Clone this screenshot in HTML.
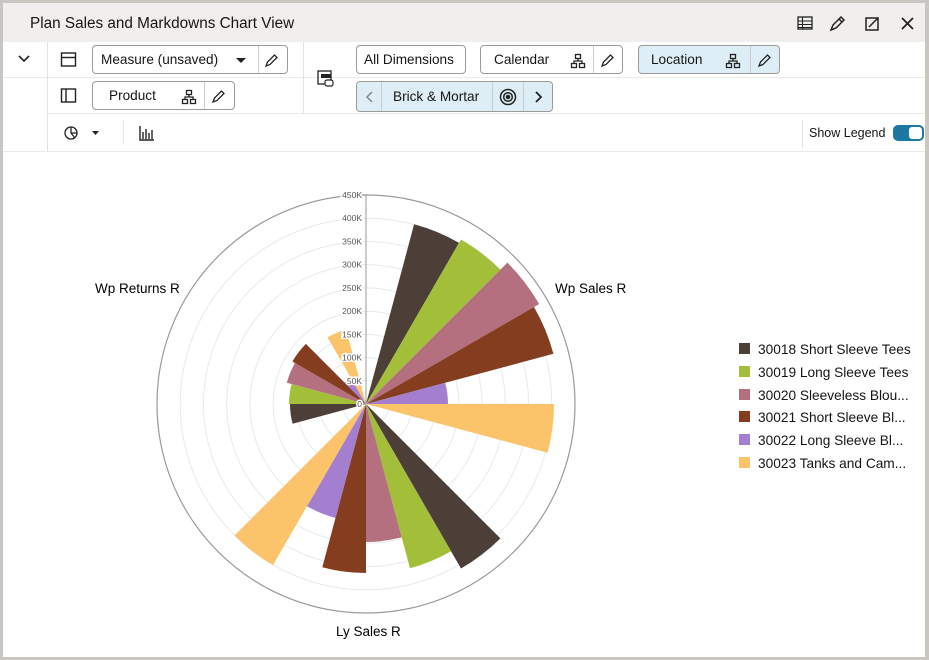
<!DOCTYPE html>
<html><head><meta charset="utf-8"><style>
*{box-sizing:border-box;margin:0;padding:0}
body{width:929px;height:660px;background:#c9c6c2;font-family:"Liberation Sans",sans-serif;color:#161513;overflow:hidden;position:relative}
#f{position:absolute;left:3px;top:3px;width:922px;height:654px;background:#fff}
#hd{position:absolute;left:0;top:0;width:922px;height:39px;background:#f1efed}
#hd .t{position:absolute;left:27px;top:12px;font-size:15.3px}
.a{position:absolute}
.btn{position:absolute;border:1px solid #9e9a96;border-radius:4px;height:29px;font-size:13.6px;display:flex;align-items:center;background:#fff}
.btn span{padding:0 0 0 8px}
.sep{position:absolute;width:1px;background:#e4e2df}
.hl{position:absolute;height:1px;background:#eceae7}
.blue{background:#deeef7}
.div{position:absolute;top:0;bottom:0;width:1px;background:#ccc}
</style></head><body>
<div id="f">
<div id="hd"><div class="t">Plan Sales and Markdowns Chart View</div>
<svg class="a" style="left:794px;top:12px" width="120" height="18" fill="none" stroke="#222" stroke-width="1.5">
<rect x="1" y="2" width="14" height="12" stroke-width="1.3"/><path d="M1 6h14M1 9.5h14M1 12.5h14M5.5 2v12" stroke-width="1.1"/>
<path d="M34 15l2-5 8-8 3 3-8 8z M42 4l3 3" />
<path d="M77 3h-8v12h12v-8 M72 12l9-9 M76 3h5v5"/>
<path d="M105 3l11 11M116 3l-11 11" stroke-width="1.8"/>
</svg></div>
<div class="hl" style="left:0;top:74px;width:922px"></div>
<div class="hl" style="left:44px;top:110px;width:878px"></div>
<div class="hl" style="left:0;top:148px;width:922px"></div>
<div class="sep" style="left:44px;top:39px;height:109px"></div>
<div class="sep" style="left:300px;top:39px;height:71px"></div>
<div class="sep" style="left:120px;top:117px;height:24px"></div>
<div class="sep" style="left:799px;top:117px;height:28px"></div>
<svg class="a" style="left:14px;top:50px" width="14" height="10"><path d="M2 3l5 5 5-5" stroke="#222" stroke-width="1.6" fill="none"/></svg>
<svg class="a" style="left:57px;top:48px" width="18" height="60" fill="none" stroke="#222" stroke-width="1.4"><rect x="1.5" y="2" width="14" height="13"/><path d="M1.5 6.5h14"/><rect x="1.5" y="38" width="14" height="13"/><path d="M6 38v13"/></svg>
<div class="btn" style="left:89px;top:42px;width:196px"><span>Measure (unsaved)</span>
<svg class="a" style="left:142px;top:10px" width="12" height="8"><path d="M1 2h10l-5 5z" fill="#222"/></svg>
<div class="div" style="left:165px"></div>
<svg class="a" style="left:171px;top:6px" width="16" height="16"><path d="M2 14l1.5-4 7-7 2.5 2.5-7 7z" stroke="#222" stroke-width="1.3" fill="none"/></svg></div>
<div class="btn" style="left:89px;top:78px;width:143px"><span style="padding-left:16px">Product</span>
<svg class="a" style="left:88px;top:7px" width="16" height="16" fill="none" stroke="#222" stroke-width="1.3"><rect x="5.5" y="1.5" width="5" height="4"/><rect x="1.5" y="10.5" width="5" height="4"/><rect x="9.5" y="10.5" width="5" height="4"/><path d="M8 5.5v2.5M4 10.5V8h8v2.5"/></svg>
<div class="div" style="left:111px"></div>
<svg class="a" style="left:118px;top:6px" width="16" height="16"><path d="M2 14l1.5-4 7-7 2.5 2.5-7 7z" stroke="#222" stroke-width="1.3" fill="none"/></svg></div>
<svg class="a" style="left:314px;top:67px" width="18" height="18"><rect x="1" y="1" width="13" height="13" fill="none" stroke="#222" stroke-width="1.3"/><rect x="4" y="4" width="10" height="4" fill="#222"/><rect x="8" y="10" width="8" height="6" rx="2" fill="#fff" stroke="#222" stroke-width="1.2"/></svg>
<div class="btn" style="left:353px;top:42px;width:110px"><span style="padding-left:7px">All Dimensions</span></div>
<div class="btn" style="left:477px;top:42px;width:143px"><span style="padding-left:13px">Calendar</span>
<svg class="a" style="left:89px;top:7px" width="16" height="16" fill="none" stroke="#222" stroke-width="1.3"><rect x="5.5" y="1.5" width="5" height="4"/><rect x="1.5" y="10.5" width="5" height="4"/><rect x="9.5" y="10.5" width="5" height="4"/><path d="M8 5.5v2.5M4 10.5V8h8v2.5"/></svg>
<div class="div" style="left:112px"></div>
<svg class="a" style="left:119px;top:6px" width="16" height="16"><path d="M2 14l1.5-4 7-7 2.5 2.5-7 7z" stroke="#222" stroke-width="1.3" fill="none"/></svg></div>
<div class="btn blue" style="left:635px;top:42px;width:142px"><span style="padding-left:12px">Location</span>
<svg class="a" style="left:86px;top:7px" width="16" height="16" fill="none" stroke="#222" stroke-width="1.3"><rect x="5.5" y="1.5" width="5" height="4"/><rect x="1.5" y="10.5" width="5" height="4"/><rect x="9.5" y="10.5" width="5" height="4"/><path d="M8 5.5v2.5M4 10.5V8h8v2.5"/></svg>
<div class="div" style="left:111px"></div>
<svg class="a" style="left:118px;top:6px" width="16" height="16"><path d="M2 14l1.5-4 7-7 2.5 2.5-7 7z" stroke="#222" stroke-width="1.3" fill="none"/></svg></div>
<div class="btn blue" style="left:353px;top:78px;width:197px;height:31px"><span style="padding-left:36px">Brick &amp; Mortar</span>
<svg class="a" style="left:8px;top:9px" width="10" height="12"><path d="M7 1L2 6l5 5" stroke="#888" stroke-width="1.5" fill="none"/></svg>
<div class="div" style="left:24px"></div><div class="div" style="left:135px"></div><div class="div" style="left:166px"></div>
<svg class="a" style="left:142px;top:6px" width="18" height="18" fill="none" stroke="#222" stroke-width="1.5"><circle cx="9" cy="9" r="7.5"/><circle cx="9" cy="9" r="4.3"/><circle cx="9" cy="9" r="1.5" fill="#222"/></svg>
<svg class="a" style="left:176px;top:9px" width="10" height="12"><path d="M3 1l5 5-5 5" stroke="#222" stroke-width="1.8" fill="none"/></svg></div>
<svg class="a" style="left:60px;top:122px" width="40" height="18" fill="none" stroke="#222" stroke-width="1.3"><circle cx="8" cy="8" r="6"/><path d="M8 2v6h6M8 8l4 5"/><path d="M29 6h7l-3.5 4z" fill="#222" stroke="none"/></svg>
<svg class="a" style="left:136px;top:122px" width="16" height="16" fill="none" stroke="#222" stroke-width="1.4"><path d="M1 1v14h14M4 14V7M7 14V4M10 14V8M13 14V5"/></svg>
<div class="a" style="left:806px;top:123px;font-size:12.5px">Show Legend</div>
<div class="a" style="left:890px;top:122px;width:31px;height:16px;border-radius:5px;background:#1c78a0"><div style="position:absolute;right:2px;top:2px;width:13px;height:12px;border-radius:3px;background:#fff"></div></div>
<svg id="ch" class="a" style="left:0;top:0" width="922" height="654"></svg>
<div class="a" style="left:736px;top:336px;font-size:13.7px;line-height:22.8px">
<div><i style="display:inline-block;width:11px;height:11px;background:#4c3f37;margin-right:8px"></i>30018 Short Sleeve Tees</div>
<div><i style="display:inline-block;width:11px;height:11px;background:#a3bf3a;margin-right:8px"></i>30019 Long Sleeve Tees</div>
<div><i style="display:inline-block;width:11px;height:11px;background:#b5707f;margin-right:8px"></i>30020 Sleeveless Blou...</div>
<div><i style="display:inline-block;width:11px;height:11px;background:#843d1f;margin-right:8px"></i>30021 Short Sleeve Bl...</div>
<div><i style="display:inline-block;width:11px;height:11px;background:#a47fd0;margin-right:8px"></i>30022 Long Sleeve Bl...</div>
<div><i style="display:inline-block;width:11px;height:11px;background:#fcc46a;margin-right:8px"></i>30023 Tanks and Cam...</div>
</div>
</div>
<script>
var cx=363,cy=401,R=209,s="";
for(var k=1;k<=8;k++)s+='<circle cx="'+cx+'" cy="'+cy+'" r="'+(R*k/9)+'" fill="none" stroke="#e6e9ee" stroke-width="1"/>';
var cols=["#4c3f37","#a3bf3a","#b5707f","#843d1f","#a47fd0","#fcc46a"];
var data=[[186,190,200,194,82,188],[190,170,138,169,118,186],[76,77,82,85,30,77]];
function p(r,a){a=a*Math.PI/180;return (cx+r*Math.sin(a)).toFixed(1)+" "+(cy-r*Math.cos(a)).toFixed(1)}
for(var c=0;c<3;c++)for(var i=0;i<6;i++){var a0=60+120*c-45+15*i,a1=a0+15,r=data[c][i];
s+='<path d="M'+cx+' '+cy+'L'+p(r,a0)+'A'+r+' '+r+' 0 0 1 '+p(r,a1)+'Z" fill="'+cols[i]+'"/>';}
s+='<circle cx="'+cx+'" cy="'+cy+'" r="'+R+'" fill="none" stroke="#9a9a9a" stroke-width="1.2"/>';
s+='<line x1="'+cx+'" y1="'+cy+'" x2="'+cx+'" y2="'+(cy-R)+'" stroke="#9a9a9a"/>';
for(var k=0;k<=9;k++){var y=cy-R*k/9,t=k?(k*50)+"K":"0";
s+='<text x="'+(cx-4)+'" y="'+(y+3)+'" text-anchor="end" font-size="8.5" fill="#555" stroke="#fff" stroke-width="3" paint-order="stroke" font-family="Liberation Sans">'+t+'</text>';}
s+='<text x="552" y="290" font-size="13.5" font-family="Liberation Sans">Wp Sales R</text>';
s+='<text x="333" y="633" font-size="13.5" font-family="Liberation Sans">Ly Sales R</text>';
s+='<text x="92" y="290" font-size="13.5" font-family="Liberation Sans">Wp Returns R</text>';
document.getElementById("ch").innerHTML=s;
</script>
</body></html>
